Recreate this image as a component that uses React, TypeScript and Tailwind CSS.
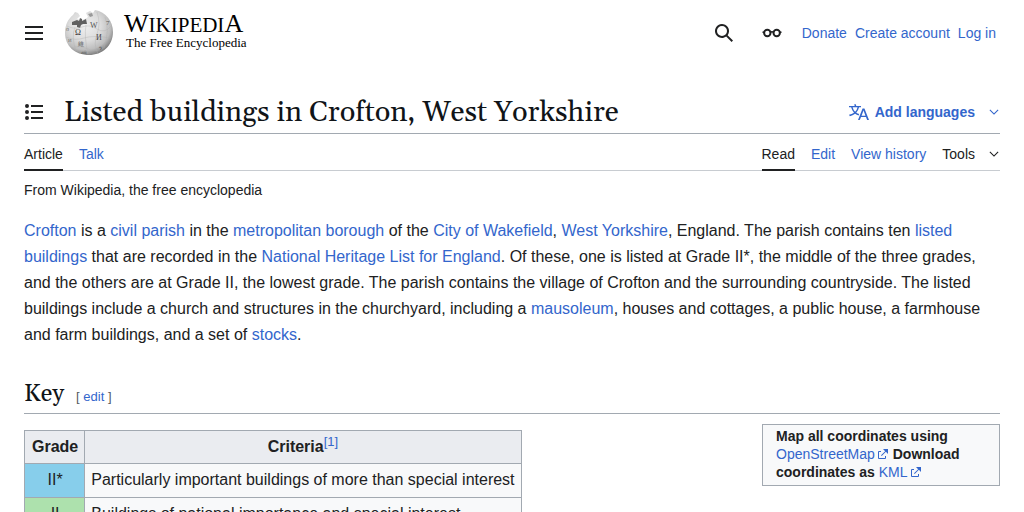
import type { ReactNode } from "react";

const EXPAND = "m17.5 4.75-7.5 7.5-7.5-7.5L1 6.25l9 9 9-9z";
const MENU = "M1 3v2h18V3zm0 8h18V9H1zm0 6h18v-2H1z";
const SEARCH = "M12.2 13.6a7 7 0 1 1 1.4-1.4l5.4 5.4-1.4 1.4zM3 8a5 5 0 1 0 10 0A5 5 0 0 0 3 8";
const LIST =
  "M7 15h12v2H7zm0-6h12v2H7zm0-6h12v2H7zM5 4a2 2 0 1 1-4 0 2 2 0 0 1 4 0m0 6a2 2 0 1 1-4 0 2 2 0 0 1 4 0m0 6a2 2 0 1 1-4 0 2 2 0 0 1 4 0";
const LANGUAGE =
  "M20 18h-1.44a.6.6 0 0 1-.4-.12.8.8 0 0 1-.23-.31L17 15h-5l-1 2.54a.8.8 0 0 1-.22.3.6.6 0 0 1-.4.14H9l4.55-11.47h1.89zm-3.53-4.31L14.89 9.5a12 12 0 0 1-.39-1.24q-.09.37-.19.69l-.19.56-1.58 4.19zm-6.3-1.58a13.4 13.4 0 0 1-2.91-1.41 11.46 11.46 0 0 0 2.81-5.37H12V4H7.31a4 4 0 0 0-.2-.56C6.87 2.79 6.6 2 6.6 2l-1.47.5s.4.89.6 1.5H0v1.33h2.15A11.23 11.23 0 0 0 5 10.7a17.2 17.2 0 0 1-5 2.1q.56.82.87 1.38a23.3 23.3 0 0 0 5.22-2.51 15.6 15.6 0 0 0 3.56 1.77zM3.63 5.33h4.91a8.1 8.1 0 0 1-2.45 4.45 9.1 9.1 0 0 1-2.46-4.45";
const EXTERNAL =
  "M6 1h5v5L8.86 3.85 4.7 8 4 7.3l4.15-4.16zM2 3h2v1H2v6h6V8h1v2a1 1 0 0 1-1 1H2a1 1 0 0 1-1-1V4a1 1 0 0 1 1-1";

const Icon = ({ d, className = "size-5" }: { d: string; className?: string }) => (
  <svg viewBox="0 0 20 20" fill="currentColor" className={className} aria-hidden="true">
    <path d={d} />
  </svg>
);

const Link = ({ children }: { children: ReactNode }) => (
  <a href="#" className="text-[#3366cc] hover:underline">
    {children}
  </a>
);

const ExternalLink = ({ children }: { children: ReactNode }) => (
  <a href="#" className="font-normal text-[#3366cc] hover:underline">
    {children}
    <svg viewBox="0 0 12 12" fill="currentColor" className="ml-0.5 inline size-3 align-[-1px]" aria-hidden="true">
      <path d={EXTERNAL} />
    </svg>
  </a>
);

const Globe = () => (
  <svg viewBox="0 0 50 50" className="size-[50px]" aria-hidden="true">
    <defs>
      <radialGradient id="globe" cx="0.42" cy="0.36" r="0.66">
        <stop offset="0" stopColor="#efefef" />
        <stop offset="0.5" stopColor="#dcdcdc" />
        <stop offset="0.8" stopColor="#bdbdbd" />
        <stop offset="1" stopColor="#7c7c7c" />
      </radialGradient>
    </defs>
    <path
      d="M9 7 L11 4 L14 5 L16 8 L13 11 L16 12 L21 11 L24 9 L22 5 L26 3 L29 5 L31 2 C42 4 49 13 49 24 C49 38 38 47 25 47 C11 47 1 38 1 25 C1 17 4 11 9 7Z"
      fill="url(#globe)"
    />
    {/* Dark inside of the missing pieces */}
    <path d="M8 14 L13 12 L15 13 L16 10 L18 11 L18 13 L22 11 L23 16 L19 16 L17 17 L16 20 L13 19 L13 17 L8 17Z" fill="#606060" />
    <path d="M24 6 L28 5 L29 8 L26 9Z" fill="#999" />
    <g fill="none" stroke="#b0b0b0" strokeWidth="0.4">
      <path d="M3 18q8 4 15 1t15 2 14-3M2 29q9 4 18 1t27 0M7 40q8-3 17 1t17-2" />
      <path d="M11 19q-4 10 1 24M22 17q-2 12 2 29M33 4q4 12 0 22t1 20M41 9q5 14-1 30" />
    </g>
    <g fill="#333" fontFamily="'Liberation Serif', serif" fontSize="8">
      <text x="11" y="27">Ω</text>
      <text x="26" y="20" fill="#555">W</text>
      <text x="32" y="32" fill="#444">И</text>
      <text x="14" y="38" fontSize="6" fill="#555">維</text>
      <text x="42" y="17" fontSize="7" fill="#555">7</text>
      <text x="2" y="23" fontSize="6" fill="#777">ი</text>
      <text x="35" y="42" fontSize="6" fill="#555">ን</text>
      <text x="17" y="46" fontSize="5" fill="#555">வி</text>
      <text x="4" y="34" fontSize="5" fill="#777">И</text>
    </g>
  </svg>
);

const Logo = () => (
  <a href="#" className="flex items-center gap-2.5 font-['Linux_Libertine','Liberation_Serif',serif] text-black">
    <Globe />
    <span className="flex flex-col pb-1.5">
      <span className="text-[21px] leading-6">
        <span className="text-[26px]">W</span>IKIPEDI<span className="text-[26px]">A</span>
      </span>
      <span className="pl-0.5 text-[13px] leading-3">The Free Encyclopedia</span>
    </span>
  </a>
);

const Header = () => (
  <header className="flex h-[66px] items-center justify-between">
    <div className="flex items-center gap-5">
      <button type="button" aria-label="Main menu">
        <Icon d={MENU} />
      </button>
      <Logo />
    </div>
    <div className="flex items-center pr-1">
      <button type="button" aria-label="Search" className="mr-7">
        <Icon d={SEARCH} />
      </button>
      <button type="button" aria-label="Appearance" className="mr-5">
        <svg viewBox="0 0 20 20" fill="none" stroke="currentColor" strokeWidth="2" className="size-5" aria-hidden="true">
          <circle cx="5.3" cy="10" r="3.2" />
          <circle cx="14.7" cy="10" r="3.2" />
          <path d="M8.3 9.2q1.7-1 3.4 0M.5 9.3h2M17.5 9.3h2" strokeWidth="1.6" />
        </svg>
      </button>
      <nav className="flex gap-2 text-sm">
        <Link>Donate</Link>
        <Link>Create account</Link>
        <Link>Log in</Link>
      </nav>
    </div>
  </header>
);

const Tab = ({ label, active = false }: { label: string; active?: boolean }) => (
  <a
    href="#"
    className={
      active
        ? "-mb-px flex items-center border-b-2 border-[#202122] pt-1 text-[#202122]"
        : "flex items-center pt-[3px] text-[#3366cc]"
    }
  >
    {label}
  </a>
);

const grades = [
  { grade: "II*", color: "bg-[#87ceeb]", criteria: "Particularly important buildings of more than special interest" },
  { grade: "II", color: "bg-[#ade1ad]", criteria: "Buildings of national importance and special interest" },
];

const KeyTable = () => (
  <table className="mt-4 border-collapse bg-[#f8f9fa]">
    <thead>
      <tr className="h-[33px] bg-[#eaecf0]">
        <th className="border border-[#a2a9b1] pr-1.5 pl-[7px]">Grade</th>
        <th className="border border-[#a2a9b1] px-1.5">
          Criteria
          <sup className="top-[-6px] text-[13px] font-normal">
            <Link>[1]</Link>
          </sup>
        </th>
      </tr>
    </thead>
    <tbody>
      {grades.map((row) => (
        <tr key={row.grade} className="h-[34px]">
          <td className={`border border-[#a2a9b1] pr-1.5 pb-0.5 pl-[7px] text-center ${row.color}`}>{row.grade}</td>
          <td className="border border-[#a2a9b1] px-1.5 pb-0.5">{row.criteria}</td>
        </tr>
      ))}
    </tbody>
  </table>
);

export default function App() {
  return (
    <div className="bg-white px-6 font-['Liberation_Sans',Arial,sans-serif] text-[#202122]">
      <Header />
      <main>
        <div className="mt-6 flex h-11 items-center justify-between border-b border-[#a2a9b1]">
          <div className="flex items-center gap-5">
            <button type="button" aria-label="Toggle the table of contents">
              <Icon d={LIST} />
            </button>
            <h1 className="pt-0.5 font-[Georgia,Gelasio,'Liberation_Serif',serif] text-[29px] leading-9 text-[#101418]">
              Listed buildings in Crofton, West Yorkshire
            </h1>
          </div>
          <button type="button" className="flex items-center text-sm font-bold text-[#3366cc]">
            <Icon d={LANGUAGE} className="mr-1.5 size-5" />
            Add languages
            <Icon d={EXPAND} className="mr-px ml-3.5 size-2.5" />
          </button>
        </div>

        <div className="flex h-[37px] justify-between border-b border-[#c8ccd1] text-sm">
          <nav className="flex gap-4">
            <Tab label="Article" active />
            <Tab label="Talk" />
          </nav>
          <nav className="flex gap-4">
            <Tab label="Read" active />
            <Tab label="Edit" />
            <Tab label="View history" />
            <button type="button" className="flex items-center pt-[3px]">
              Tools
              <Icon d={EXPAND} className="mr-px ml-3.5 size-2.5" />
            </button>
          </nav>
        </div>

        <p className="mt-2 text-sm leading-[22px]">From Wikipedia, the free encyclopedia</p>

        <p className="mt-[17px] leading-[26px]">
          <Link>Crofton</Link> is a <Link>civil parish</Link> in the <Link>metropolitan borough</Link> of the{" "}
          <Link>City of Wakefield</Link>, <Link>West Yorkshire</Link>, England. The parish contains ten{" "}
          <Link>listed buildings</Link> that are recorded in the <Link>National Heritage List for England</Link>. Of
          these, one is listed at Grade II*, the middle of the three grades, and the others are at Grade II, the lowest
          grade. The parish contains the village of Crofton and the surrounding countryside. The listed buildings
          include a church and structures in the churchyard, including a <Link>mausoleum</Link>, houses and cottages, a
          public house, a farmhouse and farm buildings, and a set of <Link>stocks</Link>.
        </p>

        <div className="mt-6 flex h-[42px] items-center border-b border-[#a2a9b1]">
          <div className="flex items-baseline gap-3 pt-0.5">
            <h2 className="font-[Georgia,Gelasio,'Liberation_Serif',serif] text-2xl text-[#101418]">Key</h2>
            <span className="text-[13px] text-[#54595d]">
              [ <Link>edit</Link> ]
            </span>
          </div>
        </div>

        <div className="flex items-start justify-between">
          <KeyTable />
          <aside className="mt-2.5 w-[238px] border border-[#a2a9b1] bg-[#f8f9fa] px-[13px] pt-0.5 pb-1 text-sm leading-[18px] font-bold">
            Map all coordinates using <ExternalLink>OpenStreetMap</ExternalLink> Download coordinates as{" "}
            <ExternalLink>KML</ExternalLink>
          </aside>
        </div>
      </main>
    </div>
  );
}
